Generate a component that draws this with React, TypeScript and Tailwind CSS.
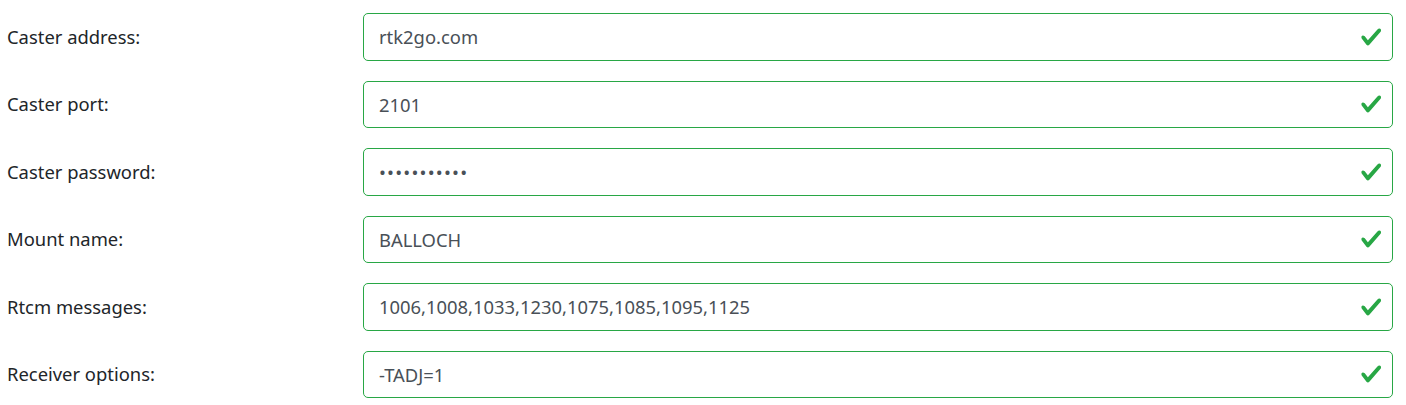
const fields = [
  { label: "Caster address:", value: "rtk2go.com", secret: false },
  { label: "Caster port:", value: "2101", secret: false },
  { label: "Caster password:", value: "•••••••••••", secret: true },
  { label: "Mount name:", value: "BALLOCH", secret: false },
  { label: "Rtcm messages:", value: "1006,1008,1033,1230,1075,1085,1095,1125", secret: false },
  { label: "Receiver options:", value: "-TADJ=1", secret: false },
];

function ValidCheck() {
  return (
    <svg
      viewBox="0 0 8 8"
      className="absolute right-[11px] top-1/2 -translate-y-1/2 w-[22.5px] h-[22.5px]"
    >
      <path
        fill="#28a745"
        d="M2.3 6.73L.6 4.53c-.4-1.04.46-1.4 1.1-.8l1.1 1.4 3.4-3.8c.6-.63 1.6-.27 1.2.7l-4 4.6c-.43.5-.8.4-1.1.1z"
      />
    </svg>
  );
}

export default function App() {
  return (
    <div
      className="w-[1406px] h-[405px] bg-white pt-[13px] pl-[7px] pr-[13px] text-[18.4px]"
      style={{ fontFamily: '"Noto Sans", "Open Sans", sans-serif' }}
    >
      {fields.map((f) => (
        <div key={f.label} className="flex items-center mb-[20px]">
          <label className="w-[356px] shrink-0 text-[#212529] leading-[30px]">
            {f.label}
          </label>
          <div className="relative flex-1">
            <input
              readOnly
              type="text"
              value={f.value}
              className={`block w-full h-[47.5px] px-[15px] pr-[45px] border border-[#28a745] rounded-[5px] text-[#495057] bg-white outline-none ${
                f.secret ? "tracking-[1.2px]" : ""
              }`}
            />
            <ValidCheck />
          </div>
        </div>
      ))}
    </div>
  );
}
